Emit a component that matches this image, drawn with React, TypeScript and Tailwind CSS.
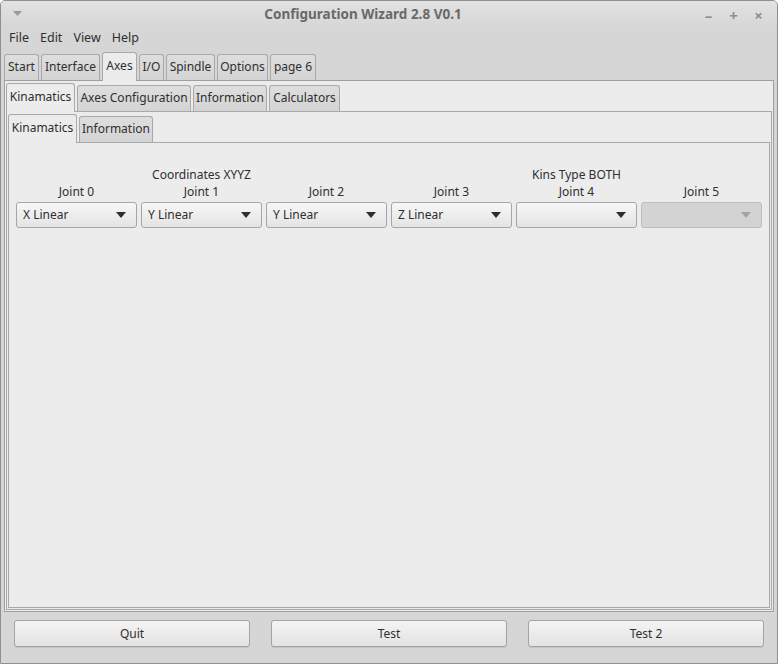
import React from 'react';

interface TabDef {
  label: string;
  w: number;
}

const topTabs: TabDef[] = [
  { label: 'Start', w: 35 },
  { label: 'Interface', w: 59 },
  { label: 'Axes', w: 35 },
  { label: 'I/O', w: 25 },
  { label: 'Spindle', w: 49 },
  { label: 'Options', w: 51 },
  { label: 'page 6', w: 46 },
];

const midTabs: TabDef[] = [
  { label: 'Kinamatics', w: 69 },
  { label: 'Axes Configuration', w: 114 },
  { label: 'Information', w: 74 },
  { label: 'Calculators', w: 71 },
];

const innerTabs: TabDef[] = [
  { label: 'Kinamatics', w: 69 },
  { label: 'Information', w: 74 },
];

const joints = [
  { label: 'Joint 0', value: 'X Linear', disabled: false },
  { label: 'Joint 1', value: 'Y Linear', disabled: false },
  { label: 'Joint 2', value: 'Y Linear', disabled: false },
  { label: 'Joint 3', value: 'Z Linear', disabled: false },
  { label: 'Joint 4', value: '', disabled: false },
  { label: 'Joint 5', value: '', disabled: true },
];

function TabRow({ tabs, active }: { tabs: TabDef[]; active: number }) {
  return (
    <div className="flex items-end gap-[2px] h-[28px] relative z-10 -mb-px">
      {tabs.map((t, i) =>
        i === active ? (
          <div
            key={t.label}
            style={{ width: t.w }}
            className="h-[29px] pb-[2px] flex items-center justify-center bg-[#ececec] border border-b-0 border-[#a9a9a9] rounded-t-[3px] whitespace-nowrap"
          >
            {t.label}
          </div>
        ) : (
          <div
            key={t.label}
            style={{ width: t.w }}
            className="h-[26px] mb-px pb-[2px] flex items-center justify-center bg-gradient-to-b from-[#dedede] to-[#d4d4d4] border border-b-0 border-[#a9a9a9] rounded-t-[3px] whitespace-nowrap"
          >
            {t.label}
          </div>
        )
      )}
    </div>
  );
}

function Arrow({ disabled }: { disabled: boolean }) {
  return (
    <svg width="10" height="6" viewBox="0 0 10 6">
      <path d="M0 0h10L5 6z" fill={disabled ? '#a3a3a3' : '#2e2e2e'} />
    </svg>
  );
}

export default function App() {
  return (
    <div className="w-[778px] h-[664px] bg-[#d6d6d6] border border-[#8f8f8f] rounded-t-[5px] flex flex-col overflow-hidden font-['Noto_Sans',sans-serif] text-[12px] text-[#2f2f2f]">
      {/* Title bar */}
      <div className="h-[27px] relative flex items-center justify-center pr-[52px] bg-gradient-to-b from-[#e2e2e2] to-[#d6d6d6]">
        <svg className="absolute left-[12px] top-[10px]" width="9" height="5" viewBox="0 0 9 5">
          <path d="M0 0h9L4.5 5z" fill="#9a9a9a" />
        </svg>
        <span className="font-bold text-[13.5px] text-[#696969]">Configuration Wizard 2.8 V0.1</span>
        <div className="absolute right-[13px] top-[3px] flex items-center gap-[14px] text-[#8e8e8e] text-[15px] font-bold">
          <span className="w-[11px] text-center">–</span>
          <span className="w-[11px] text-center">+</span>
          <span className="w-[11px] text-center">×</span>
        </div>
      </div>

      {/* Menu */}
      <div className="h-[21px] flex items-center px-[8px] gap-[11px] text-[12.5px]">
        <span>File</span>
        <span>Edit</span>
        <span>View</span>
        <span>Help</span>
      </div>

      {/* Main notebook */}
      <div className="mt-[4px] px-[3px] flex-1 flex flex-col">
        <TabRow tabs={topTabs} active={2} />
        <div className="h-[532px] border border-[#9f9f9f] bg-[#ececec] px-px pt-[3px] pb-px flex flex-col">
          <TabRow tabs={midTabs} active={0} />
          <div className="flex-1 border border-[#a9a9a9] bg-[#ececec] px-px pt-[3px] pb-px flex flex-col">
            <TabRow tabs={innerTabs} active={0} />
            <div className="flex-1 border border-[#a9a9a9] bg-[#ececec] px-[7px] pt-[23px]">
              <div className="grid grid-cols-6 gap-x-[4px]">
                <div className="col-span-3 text-center leading-[17px]">Coordinates XYYZ</div>
                <div className="col-span-3 text-center leading-[17px]">Kins Type BOTH</div>
                {joints.map((j) => (
                  <div key={j.label} className="text-center leading-[17px]">
                    {j.label}
                  </div>
                ))}
                {joints.map((j, i) => (
                  <div
                    key={i}
                    className={
                      j.disabled
                        ? 'mt-[2px] h-[26px] rounded-[3px] border border-[#bdbdbd] bg-[#d3d3d3] flex items-center justify-between pl-[6px] pr-[10px]'
                        : 'mt-[2px] h-[26px] rounded-[3px] border border-[#a6a6a6] bg-gradient-to-b from-[#f7f7f7] to-[#e4e4e4] flex items-center justify-between pl-[6px] pr-[10px]'
                    }
                  >
                    <span>{j.value}</span>
                    <Arrow disabled={j.disabled} />
                  </div>
                ))}
              </div>
            </div>
          </div>
        </div>
      </div>

      {/* Buttons */}
      <div className="flex gap-[21px] px-[13px] pt-[8px] pb-[16px]">
        {['Quit', 'Test', 'Test 2'].map((b) => (
          <button
            key={b}
            className="flex-1 h-[27px] rounded-[3px] border border-[#a3a3a3] bg-gradient-to-b from-[#f4f4f4] to-[#e3e3e3] shadow-[0_1px_0_#c4c4c4]"
          >
            {b}
          </button>
        ))}
      </div>
    </div>
  );
}
